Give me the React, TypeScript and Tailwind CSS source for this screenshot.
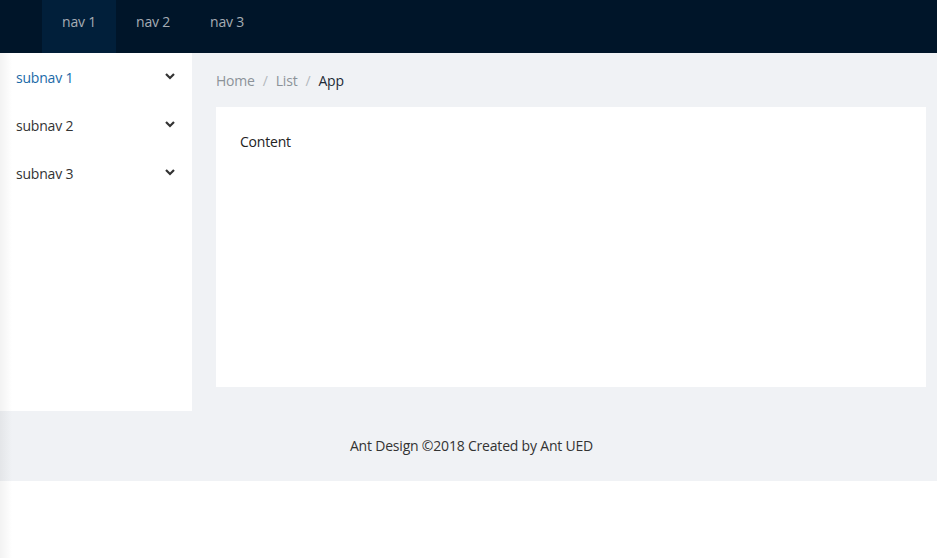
import { useState } from 'react'

// ── Data ──────────────────────────────────────────────────────────────────────

const navs = ['nav 1', 'nav 2', 'nav 3']
const subnavs = ['subnav 1', 'subnav 2', 'subnav 3']

function Chevron() {
  return (
    <svg width="10" height="8" viewBox="0 0 10 8" className="text-[#333]">
      <path d="M1 2 L5 6 L9 2" fill="none" stroke="currentColor" strokeWidth="2.2" />
    </svg>
  )
}

// ── Main page ─────────────────────────────────────────────────────────────────

export default function App() {
  const [nav, setNav] = useState(0)
  const [sub, setSub] = useState(0)

  return (
    <div className="relative min-h-[558px] bg-white font-['Open_Sans',sans-serif] text-sm tracking-[-0.2px] text-[rgba(0,0,0,0.65)]">
      {/* Header */}
      <header className="h-[53px] bg-[#001529] flex pl-[42px]">
        {navs.map((n, i) => (
          <button
            key={n}
            onClick={() => setNav(i)}
            className={
              'h-full px-5 pb-[10px] text-sm text-[#a6adb4] ' + (nav === i ? 'bg-[#011f3a]' : '')
            }
          >
            {n}
          </button>
        ))}
      </header>

      <div className="flex">
        {/* Sider */}
        <aside className="w-[192px] shrink-0 bg-white h-[358px] pt-1">
          {subnavs.map((s, i) => (
            <button
              key={s}
              onClick={() => setSub(i)}
              className={
                'w-full h-10 mb-2 flex items-center justify-between pl-4 pr-[17px] pt-px text-sm ' +
                (sub === i ? 'text-[#1a6aa8]' : 'text-[#333]')
              }
            >
              <span>{s}</span>
              <span className="-mt-[3px]">
                <Chevron />
              </span>
            </button>
          ))}
        </aside>

        {/* Main */}
        <main className="flex-1 bg-[#f0f2f5] pl-6 pr-[11px] pb-6">
          <div className="flex items-center gap-2 h-[54px] pt-px text-sm">
            <span className="text-[#8c9399]">Home</span>
            <span className="text-[#b3b8bd]">/</span>
            <span className="text-[#8c9399]">List</span>
            <span className="text-[#b3b8bd]">/</span>
            <span className="text-[#1d2b36]">App</span>
          </div>
          <div className="bg-white h-[280px] px-6 pt-[25px] text-[#222]">Content</div>
        </main>
      </div>

      {/* Footer */}
      <footer className="bg-[#f0f2f5] h-[70px] flex items-center justify-center pl-[6px] text-[#333]">
        Ant Design ©2018 Created by Ant UED
      </footer>

      {/* left edge shade */}
      <div className="pointer-events-none absolute left-0 top-[53px] bottom-0 w-[12px] bg-gradient-to-r from-[rgba(0,0,0,0.05)] to-transparent" />
    </div>
  )
}
